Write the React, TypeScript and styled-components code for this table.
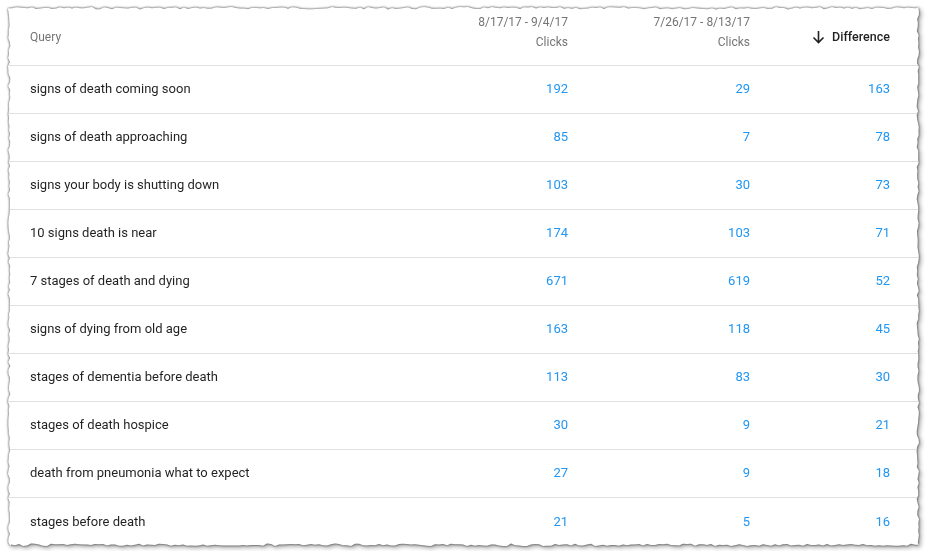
import React, { useMemo } from "react";
import styled, { createGlobalStyle } from "styled-components";

const Global = createGlobalStyle`
  html, body { margin: 0; padding: 0; background: #ffffff; }
  body { font-family: Roboto, "Noto Sans", Arial, sans-serif; }
`;

const CARD_W = 911;
const CARD_H = 539;

const Page = styled.div`
  padding: 7px 0 0 8px;
  width: 929px;
  height: 551px;
  box-sizing: border-box;
`;

const Shadow = styled.div`
  width: ${CARD_W}px;
  height: ${CARD_H}px;
  filter: drop-shadow(0 0 0.8px rgba(0, 0, 0, 0.75)) drop-shadow(2px 2px 2px rgba(0, 0, 0, 0.35));
`;

const Card = styled.div`
  width: 100%;
  height: 100%;
  background: #ffffff;
  display: flex;
  flex-direction: column;
  overflow: hidden;
`;

const Row = styled.div<{ $header?: boolean }>`
  display: grid;
  grid-template-columns: 1fr 140px 182px 140px;
  align-items: center;
  padding: ${(p) => (p.$header ? "0" : "0 0 2px 0")};
  padding-left: 22px;
  padding-right: 29px;
  height: ${(p) => (p.$header ? 59 : 48)}px;
  flex: none;
  box-sizing: border-box;
  border-bottom: 1px solid #e0e0e0;
  &:last-child { border-bottom: none; }
`;

const HeadCell = styled.div<{ $right?: boolean; $strong?: boolean }>`
  font-size: ${(p) => (p.$strong ? 12.5 : 12)}px;
  font-weight: ${(p) => (p.$strong ? 500 : 400)};
  color: ${(p) => (p.$strong ? "rgba(0,0,0,0.87)" : "#757575")};
  line-height: 16px;
  display: flex;
  justify-content: ${(p) => (p.$right ? "flex-end" : "flex-start")};
  padding-top: ${(p) => (p.$strong ? 2 : 1)}px;
`;

const StackedHead = styled.div`
  align-self: start;
  padding-top: 7px;
  display: flex;
  flex-direction: column;
  align-items: flex-end;
  gap: 4px;
  font-size: 12px;
  line-height: 16px;
  color: #757575;
`;

const SortLabel = styled.span`
  display: inline-flex;
  align-items: center;
  gap: 7px;
`;

const QueryCell = styled.div`
  font-size: 13px;
  color: rgba(0, 0, 0, 0.87);
`;

const NumCell = styled.div`
  font-size: 13px;
  color: #2196f3;
  text-align: right;
`;

const rows: [string, number, number, number][] = [
  ["signs of death coming soon", 192, 29, 163],
  ["signs of death approaching", 85, 7, 78],
  ["signs your body is shutting down", 103, 30, 73],
  ["10 signs death is near", 174, 103, 71],
  ["7 stages of death and dying", 671, 619, 52],
  ["signs of dying from old age", 163, 118, 45],
  ["stages of dementia before death", 113, 83, 30],
  ["stages of death hospice", 30, 9, 21],
  ["death from pneumonia what to expect", 27, 9, 18],
  ["stages before death", 21, 5, 16],
];

function tornPolygon(w: number, h: number): string {
  let seed = 7;
  const rnd = () => {
    seed = (seed * 9301 + 49297) % 233280;
    return seed / 233280;
  };
  const pts: string[] = [];
  const step = 4;
  const amp = 2.4;
  for (let x = 0; x <= w; x += step) pts.push(`${x}px ${(rnd() * amp).toFixed(1)}px`);
  for (let y = 0; y <= h; y += step) pts.push(`${(w - rnd() * amp).toFixed(1)}px ${y}px`);
  for (let x = w; x >= 0; x -= step) pts.push(`${x}px ${(h - rnd() * amp).toFixed(1)}px`);
  for (let y = h; y >= 0; y -= step) pts.push(`${(rnd() * amp).toFixed(1)}px ${y}px`);
  return `polygon(${pts.join(",")})`;
}

const ArrowDown = () => (
  <svg width="13" height="14" viewBox="0 0 13 14" fill="none">
    <path d="M6.5 1v11.5M1.5 7.5l5 5 5-5" stroke="#212121" strokeWidth="1.6" />
  </svg>
);

export default function App() {
  const clip = useMemo(() => tornPolygon(CARD_W, CARD_H), []);
  return (
    <Page>
      <Global />
      <Shadow>
        <Card style={{ clipPath: clip }}>
          <Row $header>
            <HeadCell>Query</HeadCell>
            <StackedHead>
              <span>8/17/17 - 9/4/17</span>
              <span>Clicks</span>
            </StackedHead>
            <StackedHead>
              <span>7/26/17 - 8/13/17</span>
              <span>Clicks</span>
            </StackedHead>
            <HeadCell $right $strong>
              <SortLabel>
                <ArrowDown />
                Difference
              </SortLabel>
            </HeadCell>
          </Row>
          {rows.map(([q, a, b, d]) => (
            <Row key={q}>
              <QueryCell>{q}</QueryCell>
              <NumCell>{a}</NumCell>
              <NumCell>{b}</NumCell>
              <NumCell>{d}</NumCell>
            </Row>
          ))}
        </Card>
      </Shadow>
    </Page>
  );
}
